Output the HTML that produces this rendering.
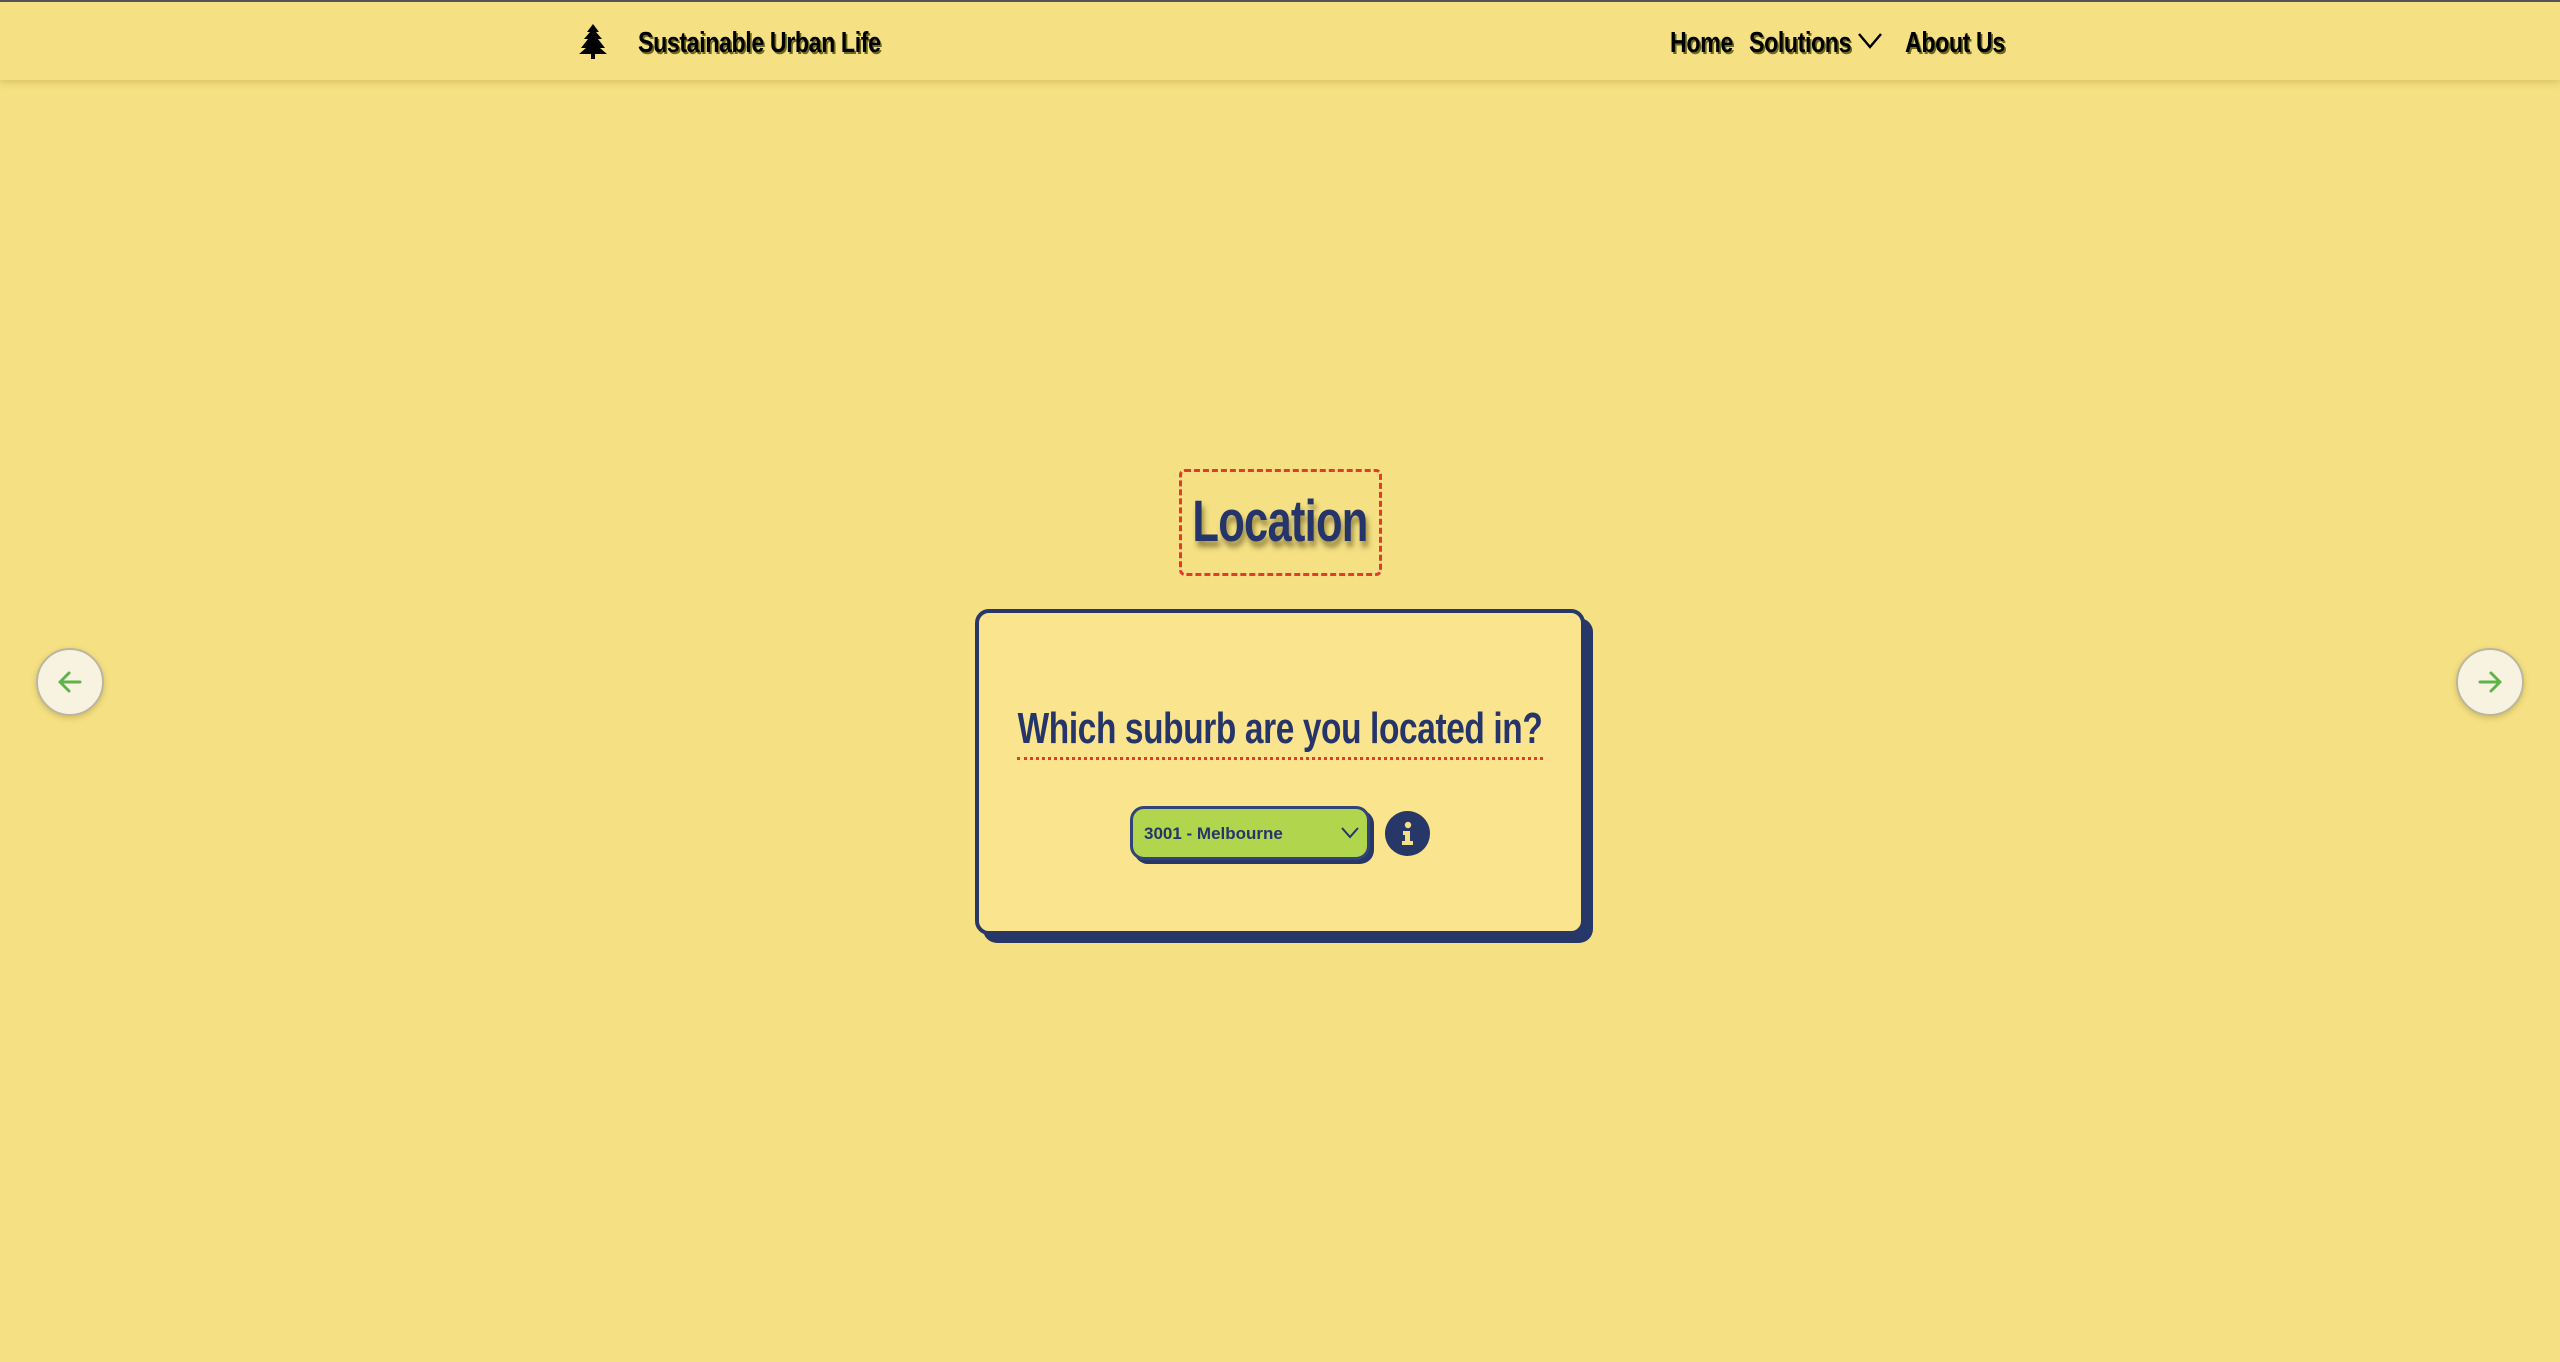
<!DOCTYPE html>
<html><head><meta charset="utf-8"><style>
*{box-sizing:border-box;margin:0;padding:0}
html,body{width:2560px;height:1362px;overflow:hidden;background:#f5e083;font-family:"Liberation Sans",sans-serif}
.top{position:absolute;left:0;top:0;width:2560px;height:2px;background:#555}
.nav{position:absolute;left:0;top:2px;width:2560px;height:78px;background:#f5e083;box-shadow:0 3px 6px rgba(150,120,20,.25)}
.nt{position:absolute;top:25px;font-size:29px;font-weight:bold;color:#000;text-shadow:2px 2px 0 #6d6a20;letter-spacing:-0.5px;transform:scaleX(.8);transform-origin:left center;white-space:nowrap}
.lb{position:absolute;left:1179px;top:469px;width:203px;height:107px;border:3px dashed #e03c2c;border-radius:6px}
.lt{position:absolute;left:1080px;top:488px;width:400px;text-align:center;font-size:58px;font-weight:bold;color:#25356a;text-shadow:3px 6px 6px rgba(60,50,0,.5);letter-spacing:-1px;transform:scaleX(.75)}
.sh{position:absolute;left:983px;top:618px;width:610px;height:325px;background:#263768;border-radius:14px}
.card{position:absolute;left:975px;top:609px;width:610px;height:326px;background:#fae48e;border:4px solid #263768;border-radius:14px}
.q{position:absolute;left:880px;top:704px;width:800px;text-align:center;font-size:44px;font-weight:bold;color:#25356a;white-space:nowrap;letter-spacing:-0.5px;transform:scaleX(.76)}
.ul{position:absolute;left:1017px;top:757px;width:526px;height:0;border-top:3px dotted #e03c2c}
.ssh{position:absolute;left:1134px;top:810px;width:240px;height:54px;background:#263768;border-radius:14px}
.sel{position:absolute;left:1130px;top:806px;width:240px;height:54px;background:#b1d64e;border:3px solid #31447a;border-radius:14px;font-weight:bold;font-size:17px;color:#25356a;padding:15px 0 0 11px}
.info{position:absolute;left:1385px;top:811px;width:45px;height:45px;border-radius:50%;background:#263768}
.arr{position:absolute;top:648px;width:68px;height:68px;border-radius:50%;background:#f8f3e0;border:2px solid #bcb6a0;box-shadow:0 2px 6px rgba(120,100,20,.3)}
</style></head><body>
<div class="top"></div>
<div class="nav">
<svg style="position:absolute;left:578px;top:22px" width="30" height="36" viewBox="0 0 30 36"><path d="M15 0 L21 8 H18 L24 15 H20 L27 24 H22 L29 30 H17 V35 H13 V30 H1 L8 24 H3 L10 15 H6 L12 8 H9 Z" fill="#000"/></svg>
<div class="nt" style="left:638px">Sustainable Urban Life</div>
<div class="nt" style="left:1670px">Home</div>
<div class="nt" style="left:1749px">Solutions</div>
<svg style="position:absolute;left:1857px;top:30px" width="26" height="18" viewBox="0 0 26 18"><path d="M2 2 L13 15 L24 2" fill="none" stroke="#000" stroke-width="2.5"/></svg>
<div class="nt" style="left:1905px">About Us</div>
</div>
<div class="lb"></div>
<div class="lt">Location</div>
<div class="sh"></div>
<div class="card"></div>
<div class="q">Which suburb are you located in?</div>
<div class="ul"></div>
<div class="ssh"></div>
<div class="sel">3001 - Melbourne
<svg style="position:absolute;left:208px;top:18px" width="18" height="12" viewBox="0 0 18 12"><path d="M1 1 L9 10 L17 1" fill="none" stroke="#25356a" stroke-width="2"/></svg></div>
<div class="info"><svg width="45" height="45" viewBox="0 0 45 45"><circle cx="23" cy="14" r="3.2" fill="#f5e083"/><path d="M18 20 H25 V30 H28 V34 H17 V30 H20 V24 H18 Z" fill="#f5e083"/></svg></div>
<div class="arr" style="left:36px"><svg width="64" height="64" viewBox="0 0 64 64"><path d="M42 32 H22 M31 23 L22 32 L31 41" fill="none" stroke="#5fb34a" stroke-width="3" stroke-linecap="round" stroke-linejoin="round"/></svg></div>
<div class="arr" style="left:2456px"><svg width="64" height="64" viewBox="0 0 64 64"><path d="M22 32 H42 M33 23 L42 32 L33 41" fill="none" stroke="#5fb34a" stroke-width="3" stroke-linecap="round" stroke-linejoin="round"/></svg></div>
</body></html>
